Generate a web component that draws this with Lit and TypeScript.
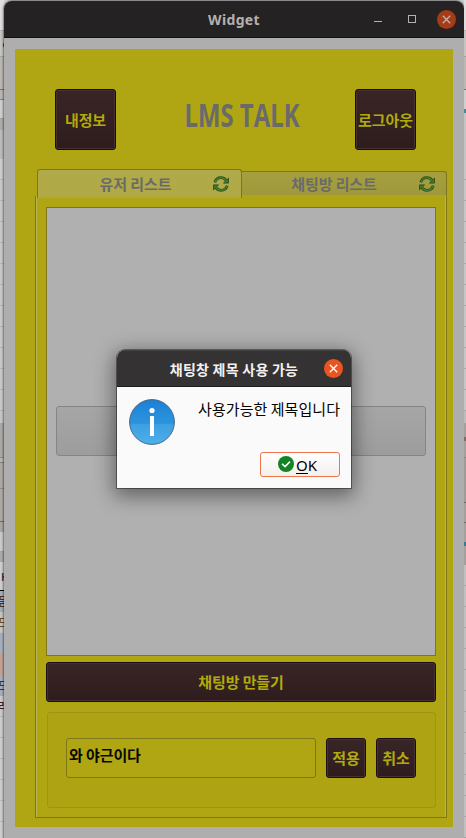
import { LitElement, html, css, svg } from "lit";
import { customElement, property } from "lit/decorators.js";
import { styleMap } from "lit/directives/style-map.js";

type Slice = { h: number; c: string; line?: string; text?: string; ink?: string };

const rows = (count: number, c: string, line: string): Slice[] =>
  Array.from({ length: count }, () => ({ h: 21, c, line }));

const leftSlices: Slice[] = [
  { h: 31, c: "#dedede", line: "#b5b3b1" },
  { h: 26, c: "#c6c4c1", line: "#a3a19e", text: "c", ink: "#3a3028" },
  { h: 33, c: "#bbb8b4", line: "#77746f" },
  { h: 10, c: "#b9b6b2", line: "#85827e" },
  { h: 19, c: "#cfcfcf", line: "#a5a29e" },
  { h: 11, c: "#b0ada9" },
  { h: 29, c: "#bcbcbc" },
  { h: 21, c: "#cdcdcd", line: "#b5b5b5" },
  ...rows(11, "#c9c9c9", "#b3b3b3"),
  { h: 12, c: "#c6c6c6" },
  { h: 35, c: "#aba8a5", line: "#8f8c89" },
  { h: 5, c: "#b8b5b2", line: "#85827f" },
  { h: 26, c: "#aeaaa6", line: "#918e8b" },
  { h: 33, c: "#aeaaa6", line: "#6f6c69" },
  { h: 10, c: "#aaa7a3" },
  { h: 20, c: "#cbcbcb", line: "#a6a3a0" },
  { h: 10, c: "#aeaba8" },
  { h: 29, c: "#cecece", line: "#000000", text: "K", ink: "#1c2a3c" },
  { h: 21, c: "#a4afba", text: "듣", ink: "#4a3420" },
  { h: 21, c: "#c8c5c1", text: "드", ink: "#6b4c22" },
  { h: 21, c: "#a5b0bc", text: ".", ink: "#3575b5" },
  { h: 21, c: "#c5a194" },
  { h: 21, c: "#a5b0bc", text: "드", ink: "#4a3420" },
  { h: 21, c: "#cbcbcb", line: "#b5b5b5", text: "라", ink: "#3b1820" },
  ...rows(6, "#cdcdcd", "#b7b7b7"),
];

const rightSlices: Slice[] = [
  { h: 31, c: "#dedede", line: "#b5b3b1" },
  { h: 26, c: "#c6c4c1", line: "#a3a19e" },
  { h: 33, c: "#bbb8b4", line: "#77746f" },
  { h: 19, c: "#cfcfcf" },
  { h: 4, c: "#4f8799" },
  { h: 46, c: "#c4c4c4" },
  ...rows(12, "#c6c6c6", "#aaaaaa"),
  { h: 12, c: "#bcbcbc" },
  { h: 14, c: "#a3a09e" },
  { h: 4, c: "#806c65" },
  { h: 17, c: "#a3a09e", line: "#888584" },
  { h: 45, c: "#9e9b99", line: "#6c6968" },
  { h: 20, c: "#a3a09e", line: "#706d6c" },
  { h: 19, c: "#a3a09e" },
  { h: 4, c: "#427794" },
  { h: 19, c: "#a3a09e" },
  ...rows(14, "#c0c0c0", "#a7a7a7"),
];

const refreshIcon = svg`
  <svg width="16" height="16" viewBox="0 0 16 16" fill="none">
    <g stroke="#2d4f1d" stroke-width="2.8">
      <path d="M1.8 6.4C2.6 3.6 5 1.7 7.9 1.7c2.2 0 3.9.9 5.1 2.7"/>
      <path d="M14.2 9.6c-.8 2.8-3.2 4.7-6.1 4.7-2.2 0-3.9-.9-5.1-2.7"/>
    </g>
    <path d="M15.5 2.2v4.9h-5zM.5 13.8V8.9h5z" fill="#3f7a28" stroke="#2d4f1d" stroke-width=".9" stroke-linejoin="round"/>
    <g stroke="#4d8a31" stroke-width="1.1">
      <path d="M2 6.2C2.8 3.5 5.1 1.7 7.9 1.7c2.2 0 3.9.9 5.3 3.1"/>
      <path d="M14 9.8c-.8 2.7-3.1 4.5-5.9 4.5-2.2 0-3.9-.9-5.3-3.1"/>
    </g>
  </svg>`;

const closeIcon = svg`
  <svg width="19" height="19" viewBox="0 0 19 19"><path d="M5.8 5.8l7.4 7.4M13.2 5.8l-7.4 7.4" stroke="currentColor" stroke-width="1.3"/></svg>`;

@customElement("backdrop-strip")
class BackdropStrip extends LitElement {
  @property({ attribute: false }) slices: Slice[] = [];

  static styles = css`
    :host { display: block; overflow: hidden; height: 838px; }
    .slice {
      box-sizing: border-box;
      overflow: hidden;
      display: flex;
      align-items: center;
      justify-content: flex-end;
      font: 500 11px/13px "Noto Sans", "Noto Sans CJK KR", sans-serif;
    }
    .glyph { margin-right: -4px; }
  `;

  render() {
    return this.slices.map(
      (s) => html`<div class="slice" style=${styleMap({
        height: `${s.h}px`,
        background: s.c,
        color: s.ink ?? "inherit",
        borderBottom: s.line ? `1px solid ${s.line}` : "none",
      })}>${s.text ? html`<span class="glyph">${s.text}</span>` : ""}</div>`
    );
  }
}

@customElement("app-root")
class AppRoot extends LitElement {
  static styles = css`
    :host {
      display: grid;
      grid-template-columns: 4px 460px 2px;
      position: relative;
      width: 466px;
      height: 838px;
      overflow: hidden;
      background: #d0d0d0;
      font-family: "Noto Sans", "Noto Sans CJK KR", sans-serif;
    }
    * { box-sizing: border-box; }
    svg { display: block; }
    .window {
      margin-top: 1px;
      height: 837px;
      background: #aeaeae;
      border-radius: 8px 8px 0 0;
      box-shadow: 0 0 2px 1px rgba(0, 0, 0, 0.45);
      overflow: hidden;
    }
    .titlebar {
      height: 37px;
      display: grid;
      grid-template-columns: 1fr 88px;
      align-items: center;
      background: #242223;
      border-bottom: 1px solid #121112;
      color: #b3b1af;
    }
    .caption {
      padding-left: 88px;
      text-align: center;
      font: 700 14px/20px "Noto Sans", sans-serif;
      letter-spacing: 0.35px;
      padding-top: 2px;
    }
    .controls { display: flex; align-items: center; }
    .minimize { width: 8px; height: 1px; margin: 5px 26px 0 -2px; background: #b3b1af; }
    .maximize { width: 8px; height: 8px; border: 1px solid #b3b1af; margin-right: 20.5px; }
    .close {
      width: 19px;
      height: 19px;
      border-radius: 50%;
      background: #a63b18;
      color: #bcb5b1;
    }
    .body {
      margin: 11px 11px 0;
      height: 778px;
      background: #b0a613;
      padding-top: 40px;
    }
    .header {
      display: flex;
      justify-content: space-between;
      align-items: center;
      height: 61px;
      margin: 0 37px 0 40px;
    }
    .logo { margin-left: 14px; overflow: visible; }
    .dark {
      display: flex;
      align-items: center;
      justify-content: center;
      background: linear-gradient(#3a2526, #2e1c1d);
      border: 1px solid #190d0f;
      border-radius: 3px;
      box-shadow: inset 0 0 0 1px #453234;
      color: #b0ab0b;
      font: 700 15px/22px "Noto Sans CJK KR", sans-serif;
      white-space: nowrap;
      letter-spacing: -0.1px;
    }
    .square { width: 61px; height: 61px; }
    .tabs { display: grid; grid-template-columns: 205px 205px; height: 29px; margin: 19px 6px 0 22px; align-items: start; position: relative; }
    .tab {
      display: grid;
      grid-template-columns: 1fr 16px;
      align-items: center;
      border: 1px solid #7f7617;
      color: #6a6a6a;
      font: 700 15px/22px "Noto Sans CJK KR", sans-serif;
      letter-spacing: -0.1px;
      text-align: center;
    }
    .tab.active {
      height: 29px;
      padding: 0 12px 0 20px;
      background: linear-gradient(#b1aa4a, #b0a944);
      border-bottom: 0;
      border-radius: 3px 3px 0 0;
    }
    .tab.idle {
      margin-top: 2px;
      height: 25px;
      padding: 0 11px 0 7px;
      background: linear-gradient(#a69f3f, #a0993c);
      border-left: 0;
      border-bottom-color: #aaa33c;
      border-radius: 0 3px 0 0;
    }
    .panel {
      margin: -2px 6px 0 20px;
      height: 622px;
      border: 1px solid #7f7617;
      border-top: 0;
      box-shadow: inset 1px 0 #b9b257, inset -1px 0 #b9b257;
      padding: 11px 10px 0;
    }
    .list {
      height: 449px;
      border: 1px solid #7f7617;
      background: #b0b0b0;
      padding: 198px 9px 0;
    }
    .room {
      height: 50px;
      border: 1px solid #858585;
      border-radius: 3px;
      background: linear-gradient(#a6a6a6, #9d9d9d);
    }
    .create { height: 40px; margin-top: 6px; }
    .group {
      display: flex;
      gap: 10px;
      margin: 10px 0 0 1px;
      height: 96px;
      padding: 25px 19px 0 18px;
      border: 1px solid #9e9518;
      border-radius: 3px;
      background: #ada313;
    }
    .field {
      width: 250px;
      height: 40px;
      border: 1px solid #7f7617;
      border-radius: 3px;
      background: #b0a613;
      padding: 5px 3px 0 2px;
      color: #090900;
      font: 700 15px/22px "Noto Sans CJK KR", sans-serif;
      letter-spacing: -0.1px;
    }
    .small { width: 40px; height: 40px; }
    .dialog {
      position: absolute;
      left: 117px;
      top: 350px;
      width: 234px;
      height: 138px;
      border-radius: 8px 8px 0 0;
      background: #fafafa;
      overflow: hidden;
    }
    .shade {
      position: absolute;
      left: 117px;
      top: 350px;
      width: 234px;
      height: 138px;
      border-radius: 8px 8px 0 0;
      box-shadow: 0 0 0 1px rgba(0, 0, 0, 0.4), 0 5px 20px 3px rgba(0, 0, 0, 0.45);
    }
    .dialog-title {
      height: 37px;
      display: grid;
      grid-template-columns: 1fr 19px;
      padding: 0 8.5px 0 27.5px;
      align-items: center;
      background: #353233;
      border-bottom: 1px solid #1d1b1c;
      box-shadow: inset 0 1px #454243;
      color: #f3f1ef;
      font: 700 14px/20px "Noto Sans CJK KR", sans-serif;
      letter-spacing: 0.25px;
      text-align: center;
    }
    .dialog-title span { padding-top: 1px; }
    .dialog-title .close { background: #e95420; color: #fff; }
    .dialog-body {
      display: grid;
      grid-template-columns: 46px 1fr;
      padding: 12px 11px 0 12px;
    }
    .message {
      text-align: right;
      color: #000;
      margin-top: -1px;
      font: 400 15px/22px "Noto Sans CJK KR", sans-serif;
      letter-spacing: 0.05px;
      white-space: nowrap;
    }
    .ok {
      grid-column: 2;
      justify-self: end;
      margin-top: 7px;
      width: 80px;
      height: 25px;
      border: 1px solid #ed764d;
      border-radius: 3px;
      background: linear-gradient(#fff, #f4efed);
      display: flex;
      align-items: center;
      padding-left: 17px;
      gap: 2px;
      font: 400 15px/18px "Noto Sans", sans-serif;
      color: #000;
    }
    .check { margin-bottom: 1px; }
    .mnemonic { display: inline-block; height: 18px; border-bottom: 1px solid #000; }
  `;

  render() {
    return html`
      <backdrop-strip .slices=${leftSlices}></backdrop-strip>
      <div class="window">
        <div class="titlebar">
          <div class="caption">Widget</div>
          <div class="controls">
            <div class="minimize"></div><div class="maximize"></div><div class="close">${closeIcon}</div>
          </div>
        </div>
        <div class="body">
          <div class="header">
            <div class="dark square">내정보</div>
            <svg class="logo" width="116" height="40" viewBox="0 0 116 40">
              <text x="-0.5" y="26.5" textLength="115" lengthAdjust="spacingAndGlyphs" fill="#6a6a6a"
                font-family="Open Sans" font-weight="700" font-size="31.5">LMS TALK</text>
            </svg>
            <div class="dark square">로그아웃</div>
          </div>
          <div class="tabs">
            <div class="tab active"><span>유저 리스트</span>${refreshIcon}</div>
            <div class="tab idle"><span>채팅방 리스트</span>${refreshIcon}</div>
          </div>
          <div class="panel">
            <div class="list"><div class="room"></div></div>
            <div class="dark create">채팅방 만들기</div>
            <div class="group">
              <div class="field">와 야근이다</div>
              <div class="dark small">적용</div>
              <div class="dark small">취소</div>
            </div>
          </div>
        </div>
      </div>
      <backdrop-strip .slices=${rightSlices}></backdrop-strip>
      <div class="shade"></div>
      <div class="dialog">
        <div class="dialog-title"><span>채팅창 제목 사용 가능</span><div class="close">${closeIcon}</div></div>
        <div class="dialog-body">
          <svg width="46" height="46" viewBox="0 0 46 46">
            <defs>
              <linearGradient id="info" x1="0" y1="0" x2="0" y2="1">
                <stop offset="0" stop-color="#1c80d6"/><stop offset=".54" stop-color="#2c95de"/>
                <stop offset=".54" stop-color="#3d9fe0"/><stop offset="1" stop-color="#4db0ea"/>
              </linearGradient>
            </defs>
            <circle cx="23" cy="23" r="22.4" fill="url(#info)" stroke="#47667f"/>
            <circle cx="23" cy="11.5" r="2.6" fill="#fff"/>
            <rect x="21" y="17" width="4" height="20" fill="#fff"/>
          </svg>
          <div class="message">사용가능한 제목입니다</div>
          <div class="ok">
            <svg class="check" width="16" height="16" viewBox="0 0 16 16"><circle cx="8" cy="8" r="8" fill="#128426"/><path d="M4 7.8l3 2.8 5-5" fill="none" stroke="#fff" stroke-width="1.5"/></svg>
            <span class="ok-text"><span class="mnemonic">O</span>K</span>
          </div>
        </div>
      </div>
    `;
  }
}
